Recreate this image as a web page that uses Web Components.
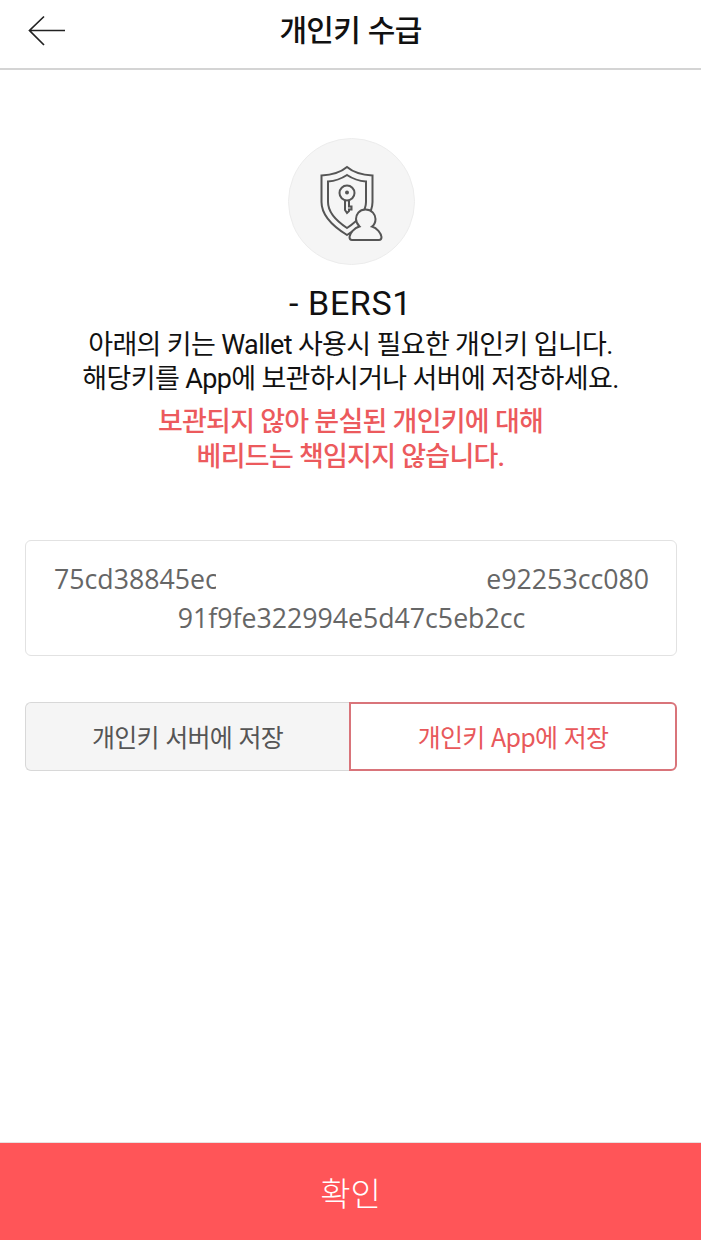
<!DOCTYPE html>
<html lang="ko">
<head>
<meta charset="utf-8">
<title>개인키 수급</title>
<style>
html,body{margin:0;padding:0;background:#fff;}
body{font-family:"Noto Sans CJK KR","Noto Sans",sans-serif;}
</style>
</head>
<body>
<key-page>
  <top-bar slot="bar">개인키 수급</top-bar>
  <shield-badge></shield-badge>
  <key-notice name="- BERS1"></key-notice>
  <key-box></key-box>
  <save-tabs></save-tabs>
  <confirm-bar slot="foot">확인</confirm-bar>
</key-page>

<script>
class KeyPage extends HTMLElement{
    constructor(){
        super();
        this.attachShadow({mode:'open'}).innerHTML = `
        <style>
        :host{display:flex;flex-direction:column;width:701px;height:1240px;overflow:hidden;}
        main{flex:1;display:flex;flex-direction:column;padding:0 25px 0 25px;}
        </style>
        <slot name="bar"></slot>
        <main><slot></slot></main>
        <slot name="foot"></slot>
        `;
    }
}

class TopBar extends HTMLElement{
    constructor(){
        super();
        this.attachShadow({mode:'open'}).innerHTML = `
        <style>
        :host{display:flex;align-items:center;justify-content:center;position:relative;height:56px;padding-bottom:12px;border-bottom:2px solid #d4d4d4;box-sizing:content-box;color:#111;}
        svg{position:absolute;left:28px;top:14px;}
        span{font-size:30px;font-weight:500;letter-spacing:-.7px;line-height:56px;}
        </style>
        <svg width="38" height="34" viewBox="0 0 38 34" fill="none" stroke="#222" stroke-width="1.700">
            <path d="M37 16.500H2M16 2.500 1.500 16.500 16 31"/>
        </svg>
        <span><slot></slot></span>
        `;
    }
}

class ShieldBadge extends HTMLElement{
    constructor(){
        super();
        this.attachShadow({mode:'open'}).innerHTML = `
        <style>
        :host{display:block;width:127px;height:127px;margin:68px 0 0 263px;}
        svg{display:block;}
        </style>
        <svg width="127" height="127" viewBox="0 0 127 127">
            <circle cx="63.500" cy="63.500" r="63" fill="#f5f5f5" stroke="#ececec"/>
            <g fill="none" stroke="#555" stroke-width="2">
                <path d="M59 29C52 35 42 37 33.500 37.500V64C33.500 78 46 89 59 97C72 89 84.500 78 84.500 64V37.500C76 37 66 35 59 29Z"/>
                <path d="M59 37C53 41 47 43 40 43.500V64C40 75 50 84 59 90C68 84 78 75 78 64V43.500C71 43 65 41 59 37Z"/>
                <circle cx="59" cy="55" r="7.500"/>
                <path d="M57 62.500V72L59 75 61 73V71.500H63.500V68.500H61V62.500"/>
            </g>
            <circle cx="59" cy="54.500" r="2" fill="#555"/>
            <path d="M77.500 71.500C71 71.500 68 76.500 68 81C68 84.500 70 87 71.500 88.500C66 90 62 95 61.500 99C61.500 101 62.500 102 64 102H91C92.500 102 93.500 101 93.500 99C93 95 89 90 84 88.500C86 87 87.500 84.500 87.500 81C87.500 76.500 84 71.500 77.500 71.500Z" fill="#f5f5f5" stroke="#555" stroke-width="2"/>
        </svg>
        `;
    }
}

class KeyNotice extends HTMLElement{
    constructor(){
        super();
        const name = this.getAttribute('name');
        this.attachShadow({mode:'open'}).innerHTML = `
        <style>
        :host{display:block;text-align:center;margin-top:17px;color:#111;font-family:Roboto,"Noto Sans CJK KR",sans-serif;font-size:27px;letter-spacing:-.65px;line-height:34px;}
        h2{margin:0 0 4px;font-size:34px;font-weight:400;line-height:42px;letter-spacing:.6px;}
        p{margin:0;white-space:nowrap;}
        .warn{color:#ec5a5d;margin-top:9px;font-weight:500;line-height:35px;letter-spacing:-.75px;}
        </style>
        <h2>${name}</h2>
        <p>아래의 키는 Wallet 사용시 필요한 개인키 입니다.<br>해당키를 App에 보관하시거나 서버에 저장하세요.</p>
        <p class="warn">보관되지 않아 분실된 개인키에 대해<br>베리드는 책임지지 않습니다.</p>
        `;
    }
}

class KeyBox extends HTMLElement{
    constructor(){
        super();
        this.attachShadow({mode:'open'}).innerHTML = `
        <style>
        :host{display:block;box-sizing:border-box;width:652px;height:116px;margin-top:65px;padding:18px 27px 0 28px;border:1.500px solid #e2e2e2;border-radius:6px;color:#666;font-family:"Open Sans","Noto Sans",sans-serif;font-size:26.700px;line-height:39px;}
        .row{display:flex;justify-content:space-between;}
        .cut{position:relative;}
        /* the middle of the key is masked in the screen, the cover nips the last letter */
        .cut::after{content:"";position:absolute;right:0;top:0;bottom:0;width:2px;background:#fff;}
        .last{text-align:center;}
        </style>
        <div class="row"><span class="cut">75cd38845ec</span><span>e92253cc080</span></div>
        <div class="last">91f9fe322994e5d47c5eb2cc</div>
        `;
    }
}

class SaveTabs extends HTMLElement{
    constructor(){
        super();
        this.attachShadow({mode:'open'}).innerHTML = `
        <style>
        :host{display:flex;width:652px;height:69px;margin-top:46px;font-size:25px;letter-spacing:-.7px;}
        div{display:flex;align-items:center;justify-content:center;box-sizing:border-box;padding-bottom:2px;}
        .off{width:324px;background:#f5f5f5;color:#555;border:1.500px solid #d8d8d8;border-right:0;border-radius:6px 0 0 6px;}
        .on{flex:1;background:#fff;color:#e8585b;border:2px solid #d9747a;border-radius:0 6px 6px 0;}
        </style>
        <div class="off">개인키 서버에 저장</div>
        <div class="on">개인키 App에 저장</div>
        `;
    }
}

class ConfirmBar extends HTMLElement{
    constructor(){
        super();
        this.attachShadow({mode:'open'}).innerHTML = `
        <style>
        :host{display:flex;align-items:center;justify-content:center;height:98px;background:#ff5558;border-top:1px solid #e8e0e0;box-sizing:border-box;color:#fff;font-size:33px;font-weight:300;}
        </style>
        <slot></slot>
        `;
    }
}

customElements.define('key-page', KeyPage);
customElements.define('top-bar', TopBar);
customElements.define('shield-badge', ShieldBadge);
customElements.define('key-notice', KeyNotice);
customElements.define('key-box', KeyBox);
customElements.define('save-tabs', SaveTabs);
customElements.define('confirm-bar', ConfirmBar);
</script>
</body>
</html>
